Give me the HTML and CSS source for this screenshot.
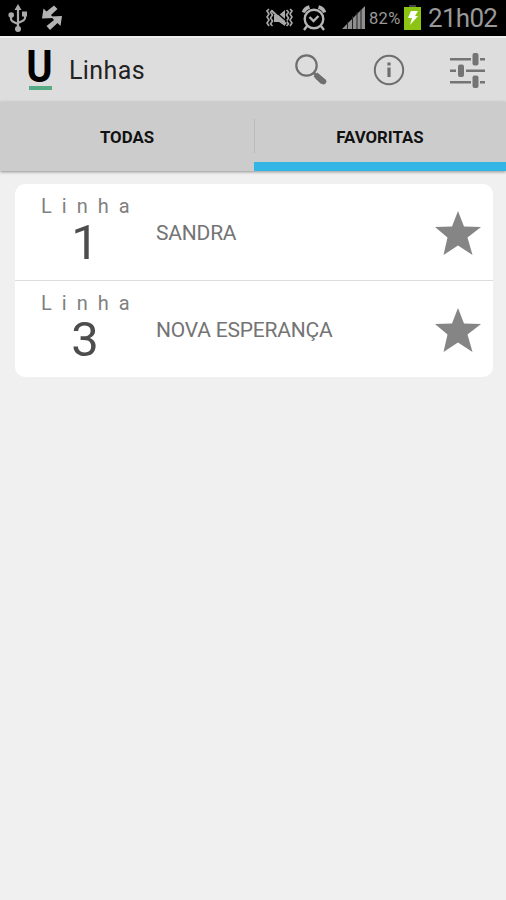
FILE: index.html
```html
<!DOCTYPE html>
<html lang="pt-BR">
<head>
    <meta charset="UTF-8">
    <meta name="viewport" content="width=device-width, initial-scale=1.0">
    <title>Linhas</title>
    <link rel="stylesheet" href="styles.css">
</head>
<body>
    <!-- Status bar -->
    <div class="status-bar">
        <svg class="icon-usb" width="20" height="28" viewBox="0 0 20 28" fill="none" stroke="#aaa" stroke-width="2.200">
            <path d="M10 4V24M3 11v4q0 2.500 7 5M17 10v4q0 2.500-7 5"/>
            <path d="M10 0l3.500 6h-7z" fill="#aaa" stroke="none"/>
            <circle cx="10" cy="25" r="3" fill="#aaa" stroke="none"/>
            <circle cx="3.200" cy="11" r="2.800" fill="#aaa" stroke="none"/>
            <path d="M14 7.500h5v5h-5z" fill="#aaa" stroke="none"/>
        </svg>
        <svg class="icon-sync" width="22" height="28" viewBox="0 0 22 28" fill="#b4b4b4">
            <path d="M12 1.500l3.500 3.500-6.500 6 2.500 3L0 14.500 1.500 4.500l3 3z"/>
            <path d="M8 26l-3.500-4 7.500-6-3-3.500 11-.5-1.500 10-3-3z"/>
        </svg>
        <span class="spacer"></span>
        <svg class="icon-mute" width="27" height="20" viewBox="0 0 27 20" fill="none" stroke="#aaa" stroke-width="1.600">
            <path d="M3 1l-2 2 2 3-2 3 2 3-2 3 2 3M6.500 2l-2 2 2 3-2 3 2 3-2 3 2 2M24 1l2 2-2 3 2 3-2 3 2 3-2 3M20.500 2l2 2-2 3 2 3-2 3 2 3-2 2"/>
            <path d="M8 7h5l6-5v16l-6-4H8z" fill="#aaa" stroke="none"/>
            <path d="M8 2.500l13 11" stroke="#000" stroke-width="1.500"/>
            <path d="M6 3l14 13" stroke-width="2"/>
        </svg>
        <svg class="icon-alarm" width="26" height="26" viewBox="0 0 26 26" fill="none" stroke="#b4b4b4" stroke-width="2.400">
            <circle cx="13" cy="14" r="9.300"/>
            <path d="M8.500 12l4 4 5-5M6 21l-3 4M20 21l3 4"/>
            <path d="M2.500 7.500q1-4 6-5.500M23.500 7.500q-1-4-6-5.500" stroke-width="3.500"/>
        </svg>
        <svg class="icon-signal" width="24" height="24" viewBox="0 0 24 24" fill="#8e8e8e">
            <path d="M0 23L23 0v23z"/>
            <path d="M5.500 16v7M10.500 10v13M15 6v17M19 3v20" stroke="#222" stroke-width="1"/>
        </svg>
        <span class="battery-level">82%</span>
        <svg class="icon-battery" width="17" height="25" viewBox="0 0 17 25">
            <path d="M5 0h7v2H5z" fill="#444"/>
            <path d="M0 2h17v23H0z" fill="#8cc414"/>
            <path d="M7 6h7l-3 5h3L6 20l2-7H4z" fill="#fff"/>
        </svg>
        <span class="clock">21h02</span>
    </div>

    <!-- Action bar -->
    <div class="action-bar">
        <div class="logo"><span class="logo-letter">U</span></div>
        <h1 class="title">Linhas</h1>
        <svg class="icon-search" width="32" height="32" viewBox="0 0 32 32" fill="none" stroke="#6e6e6e">
            <circle cx="11.500" cy="11.500" r="10.200" stroke-width="2.200"/>
            <path d="M18.500 18.500l4 4" stroke-width="3"/>
            <path d="M20.500 20.500l7.500 7.500" stroke-width="5.500"/>
            <path d="M23 23l5.500 4.500" stroke-width="5.500" stroke-linecap="round"/>
        </svg>
        <svg class="icon-info" width="32" height="32" viewBox="0 0 32 32" fill="none" stroke="#6e6e6e">
            <circle cx="16" cy="16" r="14.200" stroke-width="2"/>
            <path d="M16 13.500V23M16 8.500v3" stroke-width="3.200"/>
        </svg>
        <svg class="icon-settings" width="36" height="36" viewBox="0 0 36 36" fill="#747474">
            <path d="M0 6h21v2.500H0zM30 6h5v2.500h-5zM0 17.500h6V20H0zM16 17.500h19V20H16zM0 29h21v2.500H0zM30 29h5v2.500h-5z"/>
            <rect x="22.500" y="1" width="6" height="12.500" rx="2"/>
            <rect x="8" y="12.500" width="6" height="12.500" rx="2"/>
            <rect x="22.500" y="23.500" width="6" height="12.500" rx="2"/>
        </svg>
    </div>

    <!-- Tabs -->
    <div class="tabs">
        <div class="tab">TODAS</div>
        <div class="tab active">FAVORITAS</div>
    </div>

    <!-- Favorite lines -->
    <div class="content">
        <div class="lines">
            <div class="line">
                <div class="line-number">
                    <span class="label">Linha</span>
                    <span class="number">1</span>
                </div>
                <div class="line-name">SANDRA</div>
                <svg class="star" width="46" height="44" viewBox="0 0 46 44"><path d="M23 0l6 15.500 17 .5-13.500 10.500L37.500 44 23 34.500 8.500 44l4-17.500L0 16l17-.5z"/></svg>
            </div>
            <div class="line">
                <div class="line-number">
                    <span class="label">Linha</span>
                    <span class="number">3</span>
                </div>
                <div class="line-name">NOVA ESPERANÇA</div>
                <svg class="star" width="46" height="44" viewBox="0 0 46 44"><path d="M23 0l6 15.500 17 .5-13.500 10.500L37.500 44 23 34.500 8.500 44l4-17.500L0 16l17-.5z"/></svg>
            </div>
        </div>
    </div>
</body>
</html>
```

FILE: styles.css
```css
* {
    box-sizing: border-box;
}
body {
    margin: 0;
    min-height: 900px;
    background-color: #f0f0f0;
    font-family: Roboto, 'Liberation Sans', sans-serif;
}
svg {
    display: block;
    flex: none;
}
.status-bar {
    display: flex;
    align-items: center;
    height: 36px;
    padding: 0 8px;
    background-color: #000;
    color: #999;
}
.icon-sync {
    margin-left: 14px;
}
.spacer {
    flex: 1;
}
.icon-alarm {
    margin-left: 8px;
}
.icon-signal {
    margin: 0 3px 0 15px;
}
.battery-level {
    width: 35px;
    font-size: 16.5px;
    letter-spacing: 0.3px;
    white-space: nowrap;
}
.icon-battery {
    margin-bottom: 1px;
}
.clock {
    width: 70px;
    margin-left: 7px;
    font-size: 26px;
    letter-spacing: -0.7px;
    white-space: nowrap;
}
.action-bar {
    display: flex;
    align-items: center;
    height: 66px;
    padding: 0 20px 0 29px;
    background-color: #ddd;
    border-top: 2px solid #eee;
}
.logo {
    width: 23px;
    height: 39px;
    border-bottom: 4px solid #54ab84;
}
.logo-letter {
    display: block;
    width: 23px;
    font-size: 45px;
    font-weight: 700;
    line-height: 32px;
    text-indent: -3px;
    transform: scaleX(0.89);
    transform-origin: left;
    color: #000;
}
.title {
    flex: 1;
    margin: 0 0 0 17px;
    font-size: 25px;
    font-weight: 400;
    letter-spacing: 0.4px;
    color: #222;
}
.icon-info {
    margin-left: 46px;
}
.icon-settings {
    margin-left: 45px;
}
.tabs {
    display: flex;
    height: 69px;
    background-color: #ccc;
    box-shadow: 0 1px 3px rgba(0, 0, 0, 0.4);
}
.tab {
    width: 254px;
    font-size: 16.8px;
    font-weight: 700;
    line-height: 70px;
    text-align: center;
    color: #111;
}
.tab.active {
    flex: 1;
    border-bottom: 9px solid #33b5e5;
    background: linear-gradient(#bbb, #bbb) 0 17px / 1px 34px no-repeat;
}
.content {
    padding: 13px 13px 0 15px;
}
.lines {
    background-color: #fff;
    border-radius: 10px;
}
.line {
    display: flex;
    align-items: center;
    height: 96px;
    padding: 0 12px 0 26px;
}
.line + .line {
    height: 97px;
    border-top: 1px solid #ddd;
}
.line-number {
    width: 115px;
    height: 96px;
    padding-top: 10px;
}
.label {
    display: block;
    font-size: 20px;
    line-height: 24px;
    letter-spacing: 10px;
    white-space: nowrap;
    color: #808080;
}
.number {
    display: block;
    width: 88px;
    padding-top: 1px;
    font-size: 49px;
    line-height: 48px;
    text-align: center;
    color: #4d4d4d;
}
.line-name {
    flex: 1;
    padding-top: 2px;
    font-size: 21px;
    letter-spacing: -0.2px;
    color: #747474;
}
.star {
    margin-top: 2px;
    fill: #858585;
}
```
